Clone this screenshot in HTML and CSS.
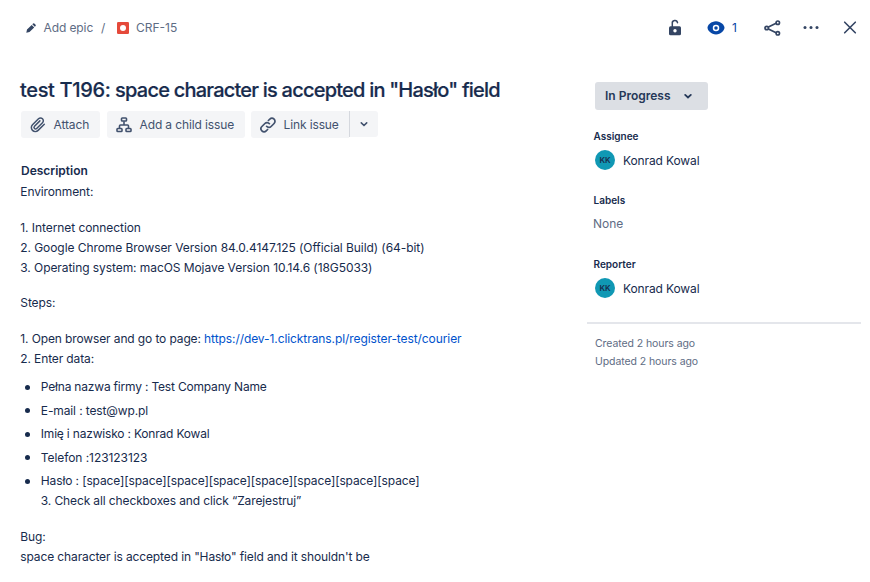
FILE: index.html
```html
<!DOCTYPE html>
<html lang="en">
<head>
<meta charset="utf-8">
<title>CRF-15</title>
<link rel="stylesheet" href="styles.css">
</head>
<body>
<header class="topbar">
  <nav class="crumbs">
    <svg class="pencil" width="12" height="12" viewBox="0 0 12 12"><path d="M1.300 10.800l.7-3.200 4.700-4.700 2.500 2.500-4.700 4.700zM7.300 2.300l.8-.8q.6-.5 1.200 0l1.300 1.300q.5.600 0 1.200l-.8.800z" fill="#344563"/></svg>
    <a class="epic">Add epic</a><span class="slash">/</span>
    <svg class="bug" width="12" height="12" viewBox="0 0 12 12"><rect width="12" height="12" rx="1.300" fill="#e5493a"/><circle cx="6" cy="6" r="3" fill="#fff"/></svg>
    <a class="key">CRF-15</a>
  </nav>
  <div class="actions">
    <svg class="lock" width="14" height="18" viewBox="0 0 14 18"><path d="M4.300 8V4.500a2.600 2.600 0 0 1 5.200-.8" fill="none" stroke="#344563" stroke-width="1.500" stroke-linecap="round"/><path d="M2.500 7.300h9q1.500 0 1.500 1.500v6q0 1.500-1.500 1.500h-9Q1 16.300 1 14.800v-6q0-1.500 1.500-1.500z" fill="#344563"/><circle cx="7" cy="11.800" r="1.700" fill="#fff"/></svg>
    <svg class="eye" width="18" height="14" viewBox="0 0 18 14"><path d="M9 .3c4.800 0 8.500 4 8.500 6.500S13.800 13.500 9 13.500.5 9.500.5 6.800 4.200.3 9 .3z" fill="#0747a6"/><circle cx="9" cy="7" r="2.500" fill="#0747a6" stroke="#fff" stroke-width="1.500"/></svg>
    <span class="watchers">1</span>
    <svg class="share" width="17" height="16" viewBox="0 0 17 16" fill="none" stroke="#344563" stroke-width="1.700"><path d="M4.400 7l7.700-3.700M4.400 8.900l7.700 3.800"/><circle cx="2.700" cy="8" r="1.700"/><circle cx="13.800" cy="2.700" r="1.700"/><circle cx="13.800" cy="13.300" r="1.700"/></svg>
    <svg class="more" width="16" height="4" viewBox="0 0 16 4" fill="#344563"><circle cx="2" cy="1.500" r="1.500"/><circle cx="8" cy="1.500" r="1.500"/><circle cx="14" cy="1.500" r="1.500"/></svg>
    <svg class="close" width="14" height="14" viewBox="0 0 14 14"><path d="M1.700 1.200l10.600 10.600M12.300 1.200L1.700 11.800" stroke="#344563" stroke-width="1.600" stroke-linecap="round"/></svg>
  </div>
</header>
<div class="layout">
  <main>
    <h1><span class="case">test T196:</span> space character is accepted in "Hasło" field</h1>
    <div class="toolbar">
      <button class="attach"><svg width="16" height="16" viewBox="0 0 16 16" fill="none" stroke="#42526e" stroke-width="1.500" stroke-linecap="round"><path d="M14.300 7.200L8.100 13.400a3.900 3.900 0 0 1-5.600-5.600l6-6a2.800 2.800 0 0 1 4 0c1.100 1.100 1.100 2.800 0 3.900l-5.800 5.800a1.550 1.550 0 0 1-2.200-2.200l5.400-5.400"/></svg><span>Attach</span></button>
      <button class="child"><svg width="16" height="16" viewBox="0 0 16 16" fill="none" stroke="#42526e" stroke-width="1.600"><rect x="5.500" y="1" width="5" height="3" rx=".8"/><rect x="1" y="11.500" width="5" height="3" rx=".8"/><rect x="10" y="11.500" width="5" height="3" rx=".8"/><path d="M8 4.300v3.700M3.500 11.500V9q0-1 1-1h7q1 0 1 1v2.500"/></svg><span>Add a child issue</span></button>
      <div class="split">
        <button class="link"><svg width="16" height="16" viewBox="0 0 16 16" fill="none" stroke="#42526e" stroke-width="1.700" stroke-linecap="round"><path d="M6.600 9.300a3 3 0 0 0 4.500.2l3-3a3 3 0 0 0-4.300-4.300L8.400 3.500"/><path d="M9.400 6.700a3 3 0 0 0-4.500-.2l-3 3a3 3 0 0 0 4.300 4.300l1.400-1.300"/></svg><span>Link issue</span></button>
        <button class="drop"><svg width="8" height="6" viewBox="0 0 8 6"><path d="M1.300 1.900L4 4.500l2.700-2.600" fill="none" stroke="#42526e" stroke-width="1.600" stroke-linecap="round"/></svg></button>
      </div>
    </div>
    <h2>Description</h2>
    <section class="body">
      <p>Environment:</p>
      <p class="slim">1. Internet connection<br>2. Google Chrome Browser Version 84.0.4147.125 (Official Build) (64-bit)<br>3. Operating system: macOS Mojave Version 10.14.6 (18G5033)</p>
      <p class="steps">Steps:</p>
      <p>1. Open browser and go to page: <a class="url">https://dev-1.clicktrans.pl/register-test/courier</a><br>2. Enter data:</p>
      <ul>
        <li class="tight">Pełna nazwa firmy : Test Company Name</li>
        <li>E-mail : test@wp.pl</li>
        <li class="tight">Imię i nazwisko : Konrad Kowal</li>
        <li class="slim">Telefon :123123123</li>
        <li>Hasło : [space][space][space][space][space][space][space][space]<br>3. Check all checkboxes and click “Zarejestruj”</li>
      </ul>
      <p>Bug:<br>space character is accepted in "Hasło" field and it shouldn't be</p>
    </section>
  </main>
  <aside>
    <button class="status"><span>In Progress</span><svg width="8" height="6" viewBox="0 0 8 6"><path d="M1.200 1.900L4 4.500l2.800-2.600" fill="none" stroke="#253858" stroke-width="1.800" stroke-linecap="round"/></svg></button>
    <div class="field"><h3>Assignee</h3><div class="person"><span class="avatar">KK</span><span class="name">Konrad Kowal</span></div></div>
    <div class="field"><h3>Labels</h3><div class="none">None</div></div>
    <div class="field"><h3>Reporter</h3><div class="person"><span class="avatar">KK</span><span class="name">Konrad Kowal</span></div></div>
    <div class="dates"><div>Created 2 hours ago</div><div>Updated 2 hours ago</div></div>
  </aside>
</div>
</body>
</html>
```
FILE: styles.css
```css
* { box-sizing: border-box; }
body { margin: 0; height: 582px; overflow: hidden; background: #fff; color: #172b4d; font: 12px/20px Inter, "Liberation Sans", sans-serif; }
h1, h2, h3, p, ul { margin: 0; padding: 0; }
svg { display: block; flex: none; }
button { display: flex; align-items: center; border: 0; margin: 0; padding: 0; font: inherit; color: #42526e; background: #f4f5f7; border-radius: 3px; white-space: nowrap; }
.topbar { display: flex; justify-content: space-between; height: 56px; padding: 0 12px 0 25px; }
.crumbs, .actions { display: flex; align-items: center; color: #5e6c84; }
.epic { margin-left: 6.5px; width: 49.5px; white-space: nowrap; letter-spacing: -.1px; }
.slash { margin-left: 8px; width: 7px; }
.bug { margin-left: 9px; }
.key { margin-left: 7px; }
.lock { margin-right: 25px; }
.watchers { color: #0747a6; margin-left: 7px; width: 7px; }
.share { margin-left: 25px; }
.more { margin-left: 22px; }
.close { margin-left: 24px; margin-right: 1px; }
.layout { display: grid; grid-template-columns: 567px 274px; padding-left: 20px; }
main { padding-top: 20px; }
h1 { font-size: 20px; line-height: 28px; font-weight: 500; letter-spacing: -.78px; white-space: nowrap; -webkit-text-stroke: .2px; }
.case { letter-spacing: -.34px; }
.toolbar { display: flex; gap: 7px; margin: 7px 0 0 1px; letter-spacing: -.12px; }
.toolbar button { height: 27px; letter-spacing: inherit; }
.attach, .child, .link { padding-left: 9px; gap: 7.5px; }
.attach { width: 79px; }
.child { width: 138px; }
.split { display: flex; margin-left: -1px; }
.toolbar .link { width: 98px; border-radius: 3px 0 0 3px; }
.toolbar .drop { width: 29px; height: 26px; justify-content: center; border-left: 1px solid #d5d8de; border-radius: 0 3px 3px 0; }
h2 { font-size: 12px; line-height: 20px; font-weight: 600; margin: 23px 0 1px 1px; }
.body { white-space: nowrap; letter-spacing: -.12px; padding-left: .3px; }
.body .slim { letter-spacing: -.07px; }
.body .tight { letter-spacing: -.19px; }
.body p + p { margin-top: 16px; }
.body p.steps { margin-top: 15px; }
.url { color: #0052cc; letter-spacing: -.08px; }
ul { list-style: none; margin: 8px 0 16px; }
li { position: relative; padding-left: 20.5px; margin-bottom: 3.5px; }
li:last-child { margin-bottom: 0; }
li::before { content: ""; position: absolute; left: 4.7px; top: 7.500px; width: 5px; height: 5px; border-radius: 50%; background: #172b4d; }
aside { padding-top: 26px; }
.status { margin-left: 8px; width: 113px; height: 28px; padding-left: 10px; gap: 13px; background: #dcdfe4; color: #253858; font-weight: 600; }
.field { margin-left: 6.5px; height: 64px; }
.status + .field { margin-top: 16px; }
h3 { font-size: 10px; line-height: 20px; font-weight: 600; }
.person { display: flex; align-items: center; height: 20px; margin: 4px 0 0 1.5px; }
.avatar { width: 20px; height: 20px; border-radius: 50%; background: #1098b4; color: #172b4d; font-size: 8px; font-weight: 600; text-align: center; line-height: 20px; }
.name { margin: 1px 0 -1px 8px; letter-spacing: -.12px; }
.none { color: #5e6c84; margin: 4px 0 0 -.5px; }
.dates { border-top: 2px solid #e4e6eb; margin-top: 4px; padding: 11px 0 0 8px; font-size: 10.500px; line-height: 18px; letter-spacing: -.08px; color: #5e6c84; }
```
